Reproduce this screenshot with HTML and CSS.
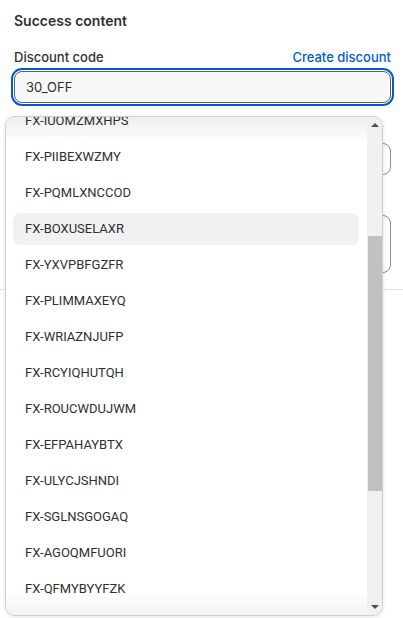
FILE: index.html
```html
<!DOCTYPE html>
<html lang="en">
<head>
<meta charset="utf-8">
<title>Success content</title>
<link rel="stylesheet" href="styles.css">
</head>
<body>
<div class="page">
  <section class="section">
    <h2 class="heading">Success content</h2>
    <div class="field">
      <div class="label-row">
        <span class="label">Discount code</span>
        <a class="link" href="#">Create discount</a>
      </div>
      <div class="input focused">30_OFF</div>
    </div>
    <div class="field">
      <div class="label-row"></div>
      <div class="input"></div>
    </div>
    <div class="field">
      <div class="label-row"></div>
      <div class="input textarea"></div>
    </div>
  </section>
  <hr class="divider">

  <div class="dropdown">
    <div class="list">
      <ul class="items">
        <li class="item">FX-IUOMZMXHPS</li>
        <li class="item">FX-PIIBEXWZMY</li>
        <li class="item">FX-PQMLXNCCOD</li>
        <li class="item hover">FX-BOXUSELAXR</li>
        <li class="item">FX-YXVPBFGZFR</li>
        <li class="item">FX-PLIMMAXEYQ</li>
        <li class="item">FX-WRIAZNJUFP</li>
        <li class="item">FX-RCYIQHUTQH</li>
        <li class="item">FX-ROUCWDUJWM</li>
        <li class="item">FX-EFPAHAYBTX</li>
        <li class="item">FX-ULYCJSHNDI</li>
        <li class="item">FX-SGLNSGOGAQ</li>
        <li class="item">FX-AGOQMFUORI</li>
        <li class="item">FX-QFMYBYYFZK</li>
      </ul>
    </div>
    <div class="scrollbar">
      <div class="arrow up"></div>
      <div class="track">
        <div class="thumb"></div>
      </div>
      <div class="arrow down"></div>
    </div>
  </div>
</div>
</body>
</html>
```

FILE: styles.css
```css
* { box-sizing: border-box; }
html, body { margin: 0; padding: 0; background: #ffffff; }
body {
  font-family: Inter, "Noto Sans", "Liberation Sans", sans-serif;
  font-size: 13px;
  line-height: 20px;
  color: #303030;
}
.page { position: relative; width: 403px; height: 618px; overflow: hidden; }

.section {
  padding: 11px 12px 0 14px;
  display: flex;
  flex-direction: column;
  gap: 16px;
}
.heading {
  margin: 0;
  font-size: 14px;
  line-height: 20px;
  font-weight: 600;
  color: #303030;
}
.field { display: flex; flex-direction: column; gap: 4px; }
.label-row {
  min-height: 20px;
  display: flex;
  justify-content: space-between;
  align-items: center;
}
.label { font-weight: 500; color: #303030; }
.link { color: #005bd3; text-decoration: none; font-weight: 450; }

.input {
  height: 32px;
  border: 1px solid #8a8a8a;
  border-radius: 8px;
  background: #fdfdfd;
  padding: 0 12px 0 11px;
  display: flex;
  align-items: center;
  color: #303030;
}
.input.focused {
  background: #f7f7f7;
  border-color: #616161;
  outline: 2px solid #005bd3;
  outline-offset: 1px;
}
.input.textarea { height: 58px; }

.divider {
  margin: 16px 0 0;
  border: 0;
  border-top: 1px solid #e3e3e3;
}

.dropdown {
  position: absolute;
  left: 5px;
  top: 116px;
  width: 378px;
  height: 500px;
  border: 1px solid #cfcfcf;
  border-radius: 10px;
  background: #ffffff;
  box-shadow: 0 1px 4px rgba(0, 0, 0, 0.12);
  overflow: hidden;
  display: flex;
}
.list {
  flex: 1;
  overflow: hidden;
  padding: 0 8px 0 7px;
  background:
    linear-gradient(#eeeeee, rgba(255, 255, 255, 0)) top / 100% 26px no-repeat,
    linear-gradient(rgba(255, 255, 255, 0), #f3f3f3) bottom / 100% 24px no-repeat,
    #ffffff;
}

.items {
  list-style: none;
  margin: -12px 0 0;
  padding: 0;
  display: flex;
  flex-direction: column;
  gap: 4px;
}
.item {
  height: 32px;
  flex: none;
  padding: 0 12px;
  display: flex;
  align-items: center;
  border-radius: 8px;
  color: #303030;
  font-family: Roboto, "Noto Sans", sans-serif;
  font-size: 13px;
}
.item.hover { background: #f1f1f1; }

.scrollbar {
  width: 15px;
  background: #f1f1f1;
  display: flex;
  flex-direction: column;
}
.arrow {
  height: 16px;
  display: flex;
  align-items: center;
  justify-content: center;
}
.arrow::before {
  content: "";
  width: 0;
  height: 0;
  border-left: 4px solid transparent;
  border-right: 4px solid transparent;
}
.arrow.up::before { border-bottom: 4px solid #505050; }
.arrow.down::before { border-top: 4px solid #505050; }
.track { flex: 1; display: flex; flex-direction: column; }
.thumb {
  margin: 103px 0 0 1px;
  height: 255px;
  background: #c1c1c1;
}
```
